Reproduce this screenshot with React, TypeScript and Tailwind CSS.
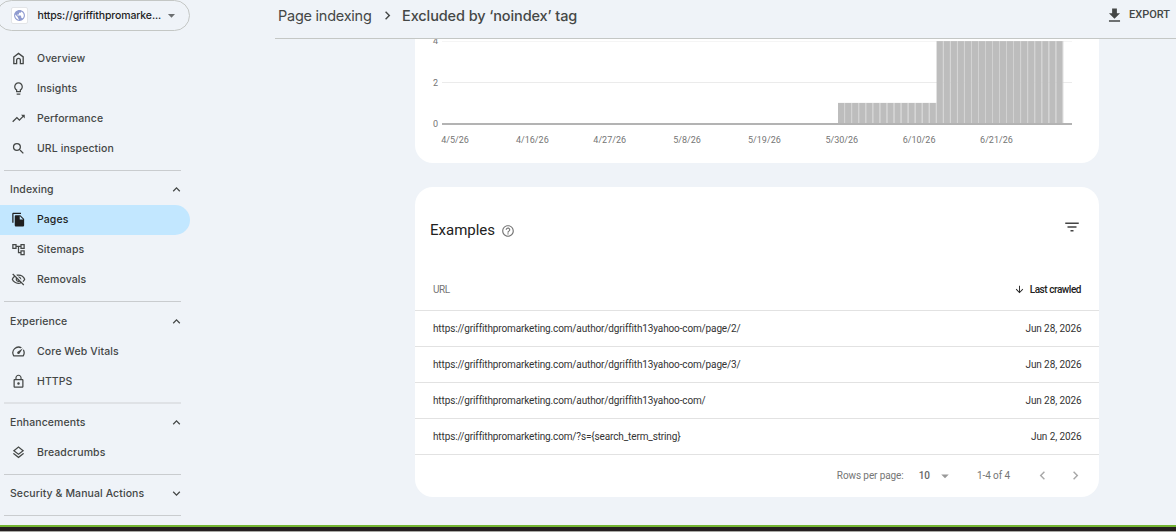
import type { ReactNode } from "react";
import {
  MdArrowDownward,
  MdArrowDropDown,
  MdChevronLeft,
  MdChevronRight,
  MdExpandLess,
  MdExpandMore,
  MdFileCopy,
  MdFileDownload,
  MdFilterList,
  MdHelpOutline,
  MdLightbulbOutline,
  MdLockOutline,
  MdOutlineAccountTree,
  MdOutlineLayers,
  MdOutlineVisibilityOff,
  MdPublic,
  MdSearch,
  MdSpeed,
  MdTrendingUp,
} from "react-icons/md";

function HomeIcon() {
  return (
    <svg viewBox="0 0 24 24" width="15" height="15" fill="none" stroke="currentColor" strokeWidth="2.1">
      <path d="M4.5 9.5 12 3.8l7.5 5.7V20.2H15v-5.4a3 3 0 0 0-6 0v5.4H4.5Z" />
    </svg>
  );
}

type ItemProps = { icon: ReactNode; label: string; active?: boolean };

function NavItem({ icon, label, active = false }: ItemProps) {
  return (
    <a
      className={`flex h-[30px] w-[190px] items-center rounded-r-full rounded-l-[15px] pl-[11px] ${
        active ? "bg-[#c2e7ff] text-[#1f1f1f]" : "text-[#444746]"
      }`}
    >
      <span className="mb-px flex w-[26px] shrink-0 items-center">{icon}</span>
      <span className="text-[10.5px] font-medium tracking-[0.09px] whitespace-nowrap">{label}</span>
    </a>
  );
}

function SectionHead({ label, open = true }: { label: string; open?: boolean }) {
  return (
    <div className="flex h-[30px] w-[184px] items-center justify-between pl-[10px] text-[#444746]">
      <span className="text-[10.5px] font-medium tracking-[0.09px] whitespace-nowrap">{label}</span>
      {open ? <MdExpandLess size={15} className="mb-px" /> : <MdExpandMore size={15} className="mb-px" />}
    </div>
  );
}

function Rule({ soft = false }: { soft?: boolean }) {
  return <div className={soft ? "ml-1 h-0.5 w-[177px] bg-[#dfe2e6]" : "ml-1 h-px w-[177px] bg-[#c9cccf]"} />;
}

function Sidebar() {
  return (
    <nav className="flex w-[275px] shrink-0 flex-col font-[Inter,sans-serif]">
      <div className="-ml-1 flex h-[31px] w-[194px] shrink-0 items-center rounded-full border border-[#c4c7c5] pl-[14px]">
        <span className="flex size-[17px] items-center justify-center rounded-[2px] border border-[#e3e5e8] bg-white text-[#8f9bd0]">
          <MdPublic size={13} />
        </span>
        <span className="ml-[9.5px] w-[123.5px] text-[10.5px] font-medium tracking-[-0.14px] whitespace-nowrap text-[#1f1f1f]">
          https://griffithpromarke...
        </span>
        <MdArrowDropDown size={17} className="ml-0.5 text-[#6b6e70]" />
      </div>
      <div className="mt-[13px] flex flex-col">
        <NavItem icon={<HomeIcon />} label="Overview" />
        <NavItem icon={<MdLightbulbOutline size={15} />} label="Insights" />
        <NavItem icon={<MdTrendingUp size={15} />} label="Performance" />
        <NavItem icon={<MdSearch size={15} />} label="URL inspection" />
      </div>
      <div className="mt-[6px]"><Rule /></div>
      <div className="mt-1 flex flex-col">
        <SectionHead label="Indexing" />
        <NavItem icon={<MdFileCopy size={15} />} label="Pages" active />
        <NavItem icon={<MdOutlineAccountTree size={15} />} label="Sitemaps" />
        <NavItem icon={<MdOutlineVisibilityOff size={15} />} label="Removals" />
      </div>
      <div className="mt-[6px]"><Rule /></div>
      <div className="mt-[5px] flex flex-col">
        <SectionHead label="Experience" />
        <NavItem icon={<MdSpeed size={15} />} label="Core Web Vitals" />
        <NavItem icon={<MdLockOutline size={15} />} label="HTTPS" />
      </div>
      <div className="mt-[5px]"><Rule soft /></div>
      <div className="mt-1 flex flex-col">
        <SectionHead label="Enhancements" />
        <NavItem icon={<MdOutlineLayers size={15} />} label="Breadcrumbs" />
      </div>
      <div className="mt-[6px]"><Rule /></div>
      <div className="mt-1">
        <SectionHead label="Security & Manual Actions" open={false} />
      </div>
      <div className="mt-[6px]"><Rule /></div>
    </nav>
  );
}

const dates = ["4/5/26", "4/16/26", "4/27/26", "5/8/26", "5/19/26", "5/30/26", "6/10/26", "6/21/26"];
const counts = [...Array<number>(14).fill(1), ...Array<number>(18).fill(4)];

function Chart() {
  return (
    <svg width="684" height="124" className="block font-[Roboto,sans-serif] text-[9px]">
      <rect x="27" y="2" width="630" height="1" fill="#f5f5f5" />
      <rect x="27" y="43" width="630" height="1" fill="#ebebeb" />
      {counts.map((n, i) => (
        <rect key={i} x={423 + i * 7.04} y={84.5 - n * 20.6} width="6.4" height={n * 20.6} fill="#bdbdbd" />
      ))}
      {counts.map((n, i) => (
        <rect key={i} x={429.2 + i * 7.04} y={84.5 - n * 20.6} width="0.9" height={n * 20.6} fill="#cfcfcf" />
      ))}
      <rect x="27" y="84" width="630" height="2" fill="#b3b3b3" />
      <g fill="#757575" textAnchor="end">
        <text x="23" y="5.3">4</text>
        <text x="23" y="46.5">2</text>
        <text x="23" y="88">0</text>
      </g>
      <g fill="#757575" textAnchor="middle">
        {dates.map((d, i) => (
          <text key={d} x={40 + i * 77.35} y="103.5">{d}</text>
        ))}
      </g>
    </svg>
  );
}

const rows = [
  ["https://griffithpromarketing.com/author/dgriffith13yahoo-com/page/2/", "Jun 28, 2026"],
  ["https://griffithpromarketing.com/author/dgriffith13yahoo-com/page/3/", "Jun 28, 2026"],
  ["https://griffithpromarketing.com/author/dgriffith13yahoo-com/", "Jun 28, 2026"],
  ["https://griffithpromarketing.com/?s={search_term_string}", "Jun 2, 2026"],
];

function Examples() {
  return (
    <section className="mt-6 ml-[140px] flex h-[310px] w-[684px] flex-col rounded-[18px] bg-white text-[10px] text-[#333]">
      <div className="flex h-[87px] items-center pr-[18px] pl-[15px]">
        <h2 className="text-[15px] text-[#212121]">Examples</h2>
        <MdHelpOutline size={14} className="ml-[6px] text-[#757575]" />
        <MdFilterList size={18} className="mb-[7px] ml-auto text-[#444]" />
      </div>
      <div className="flex h-[37px] items-start justify-between border-b border-[#e2e2e2] pt-2 pr-[18px] pl-[18px]">
        <span className="tracking-[-0.4px] text-[#757575]">URL</span>
        <span className="flex items-center gap-[5px] font-medium tracking-[-0.45px] text-[#212121]">
          <MdArrowDownward size={11} />
          Last crawled
        </span>
      </div>
      {rows.map(([url, date]) => (
        <div key={url} className="flex h-9 items-center justify-between border-b border-[#e2e2e2] pr-[17.5px] pl-[18px]">
          <span className="tracking-[-0.135px]">{url}</span>
          <span className="tracking-[-0.1px]">{date}</span>
        </div>
      ))}
      <div className="flex h-[41px] items-center justify-end pr-[15px] text-[#757575]">
        <span className="tracking-[-0.1px]">Rows per page:</span>
        <span className="ml-[15px] font-medium text-[#666]">10</span>
        <MdArrowDropDown size={18} className="ml-[6px] text-[#999]" />
        <span className="ml-[23px] tracking-[-0.1px]">1-4 of 4</span>
        <MdChevronLeft size={17} className="mb-px ml-6 text-[#a8a8a8]" />
        <MdChevronRight size={17} className="mb-px ml-4 text-[#a8a8a8]" />
      </div>
    </section>
  );
}

export default function App() {
  return (
    <div className="flex h-[532px] w-[1176px] flex-col overflow-hidden bg-[#eff3f8]">
      <div className="flex h-[525px] shrink-0 overflow-hidden">
        <Sidebar />
        <main className="flex min-w-0 flex-1 flex-col font-[Roboto,sans-serif]">
          <header className="flex h-[39px] shrink-0 items-center border-b border-[#c4c7c5] pb-[7px] pl-[3px] font-[Inter,sans-serif] text-[#444746]">
            <span className="w-[94px] text-[14.5px] tracking-[-0.25px] whitespace-nowrap">Page indexing</span>
            <MdChevronRight size={17} className="mr-[6px] ml-[7px]" />
            <span className="text-[14.5px] font-medium tracking-[-0.1px]">Excluded by ‘noindex’ tag</span>
            <span className="mt-[-1px] mr-[6px] ml-auto flex items-center gap-[5px] font-[Roboto,sans-serif] text-[11px] font-medium">
              <MdFileDownload size={19} />
              EXPORT
            </span>
          </header>
          <section className="ml-[140px] h-[124px] w-[684px] shrink-0 overflow-hidden rounded-b-[18px] bg-white">
            <Chart />
          </section>
          <Examples />
        </main>
      </div>
      <div className="h-[2px] shrink-0 bg-[#73b532]" />
      <div className="h-1 shrink-0 bg-[#241f20]" />
      <div className="h-px shrink-0 bg-[#a9a9a5]" />
    </div>
  );
}
